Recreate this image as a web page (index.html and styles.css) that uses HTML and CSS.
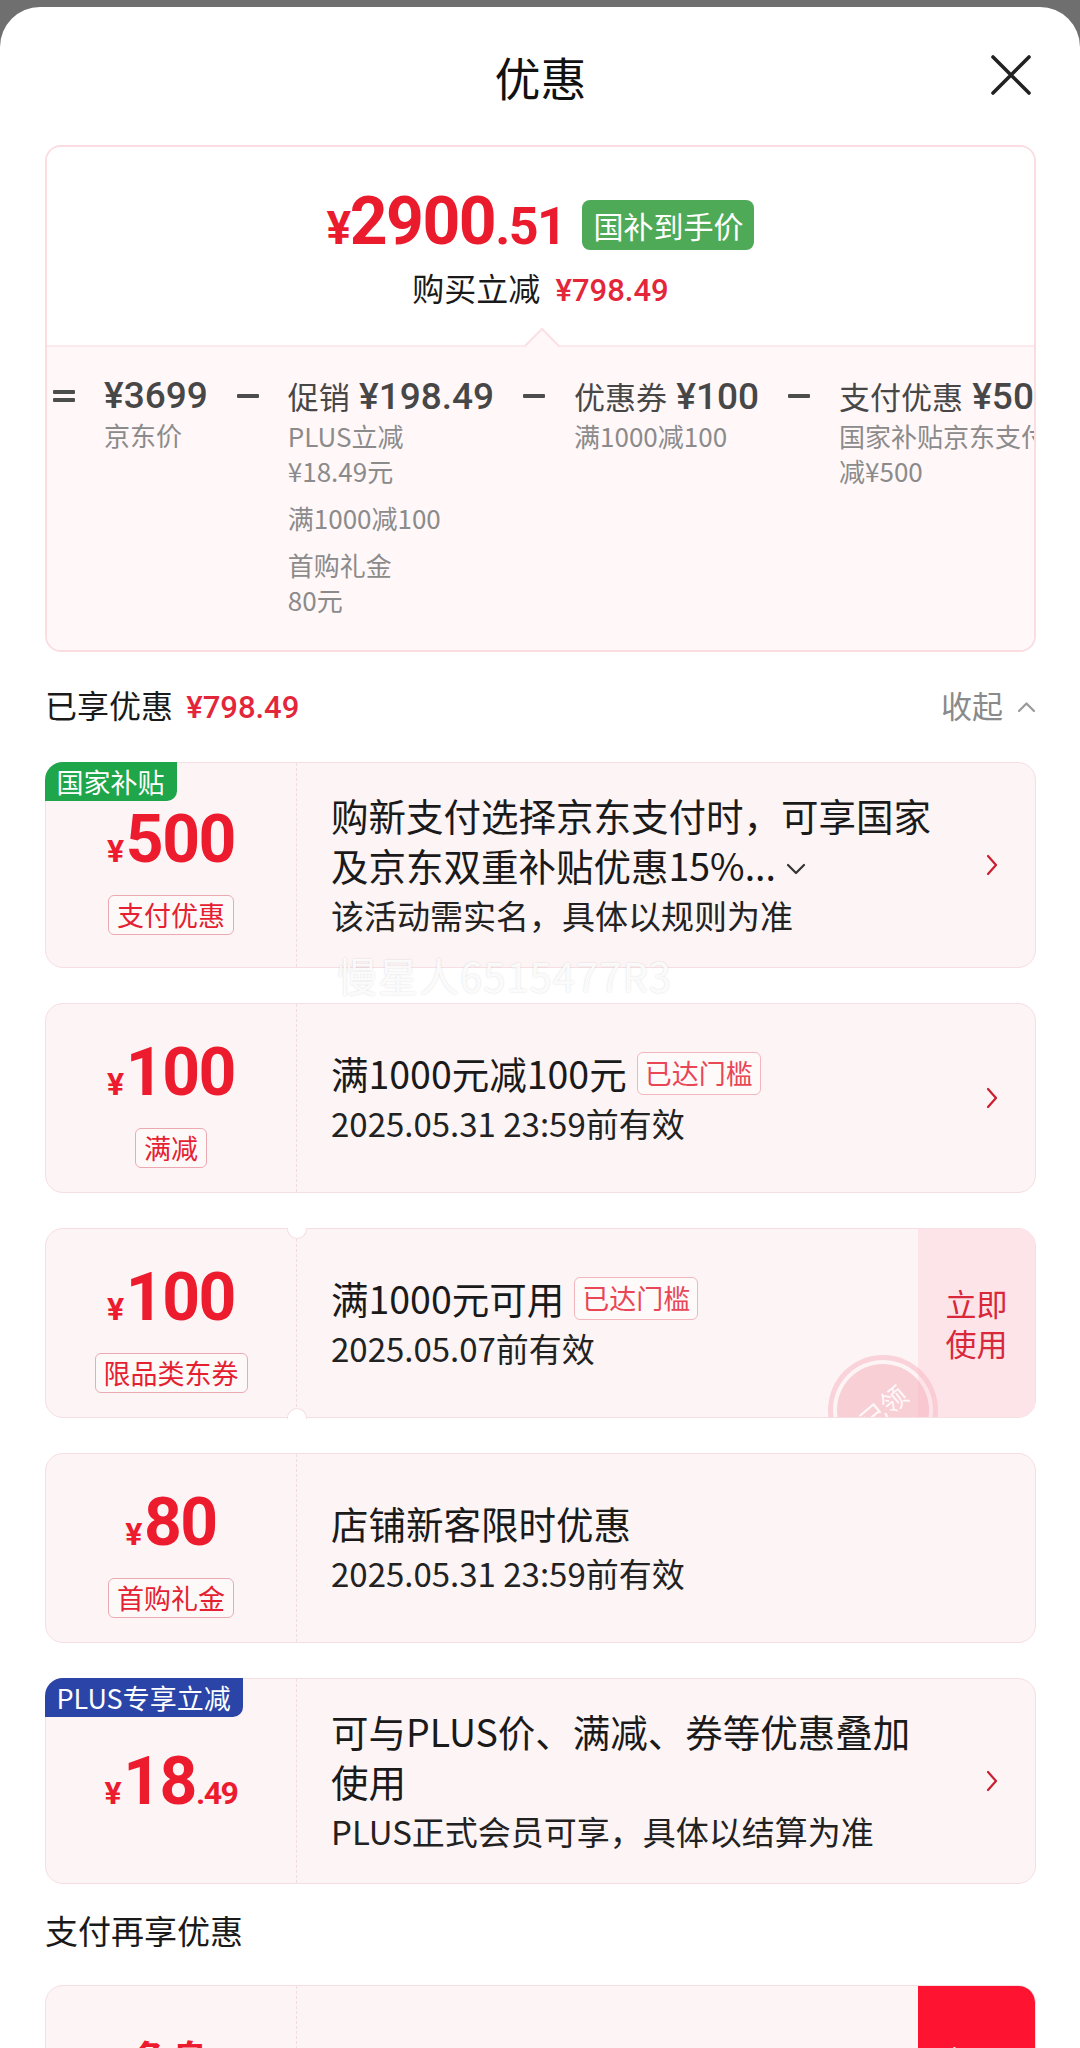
FILE: index.html
```html
<!DOCTYPE html>
<html lang="zh-CN">
<head>
<meta charset="utf-8">
<title>优惠</title>
<link rel="stylesheet" href="styles.css">
</head>
<body>
<div class="sheet">
  <header class="header">
    <h1 class="title">优惠</h1>
    <button class="close" aria-label="关闭">
      <svg viewBox="0 0 42 40"><path d="M3 2 L39 38 M39 2 L3 38"/></svg>
    </button>
  </header>

  <section class="summary">
    <div class="summary-top">
      <div class="final">
        <span class="final-price"><span class="cur">¥</span>2900<span class="dec">.51</span></span>
        <span class="final-badge">国补到手价</span>
      </div>
      <div class="save">购买立减 <span class="save-amt">¥798.49</span></div>
    </div>
    <div class="summary-bottom">
      <div class="breakdown">
        <span class="op op-eq"><i></i><i></i></span>
        <div class="bk-col">
          <div class="bk-title"><span class="bk-num">¥3699</span></div>
          <div class="bk-sub"><p>京东价</p></div>
        </div>
        <span class="op"><i></i></span>
        <div class="bk-col">
          <div class="bk-title"><span class="bk-label">促销</span><span class="bk-num"> ¥198.49</span></div>
          <div class="bk-sub">
            <p>PLUS立减<br>¥18.49元</p>
            <p>满1000减100</p>
            <p>首购礼金<br>80元</p>
          </div>
        </div>
        <span class="op"><i></i></span>
        <div class="bk-col">
          <div class="bk-title"><span class="bk-label">优惠券</span><span class="bk-num"> ¥100</span></div>
          <div class="bk-sub"><p>满1000减100</p></div>
        </div>
        <span class="op"><i></i></span>
        <div class="bk-col">
          <div class="bk-title"><span class="bk-label">支付优惠</span><span class="bk-num"> ¥500</span></div>
          <div class="bk-sub"><p>国家补贴京东支付立<br>减¥500</p></div>
        </div>
      </div>
    </div>
  </section>

  <div class="applied">
    <div class="applied-title">已享优惠 <span class="applied-amt">¥798.49</span></div>
    <div class="collapse">收起<svg viewBox="0 0 19 12"><path d="M2 10 L9.5 2.5 L17 10"/></svg></div>
  </div>

  <div class="coupons">
    <div class="card">
      <span class="corner corner-green">国家补贴</span>
      <div class="card-left">
        <div class="amount"><span class="cur">¥</span>500</div>
        <span class="tag">支付优惠</span>
      </div>
      <div class="card-body">
        <div class="card-text">
          <div class="card-title">购新支付选择京东支付时，可享国家<br>及京东双重补贴优惠15%...<svg class="more" viewBox="0 0 20 12"><path d="M2 2 L10 10 L18 2"/></svg></div>
          <div class="card-sub">该活动需实名，具体以规则为准</div>
        </div>
        <svg class="chev" viewBox="0 0 12 22"><path d="M2 2 L10 11 L2 20"/></svg>
      </div>
    </div>

    <div class="card">
      <div class="card-left">
        <div class="amount"><span class="cur">¥</span>100</div>
        <span class="tag">满减</span>
      </div>
      <div class="card-body">
        <div class="card-text">
          <div class="card-title">满1000元减100元<span class="reach">已达门槛</span></div>
          <div class="card-sub">2025.05.31 23:59前有效</div>
        </div>
        <svg class="chev" viewBox="0 0 12 22"><path d="M2 2 L10 11 L2 20"/></svg>
      </div>
    </div>

    <div class="card ticket">
      <div class="stamp-clip"><div class="stamp"><span>已领</span></div></div>
      <div class="card-left">
        <div class="amount"><span class="cur">¥</span>100</div>
        <span class="tag">限品类东券</span>
      </div>
      <div class="card-body">
        <div class="card-text">
          <div class="card-title">满1000元可用<span class="reach">已达门槛</span></div>
          <div class="card-sub">2025.05.07前有效</div>
        </div>
      </div>
      <div class="card-action">立即<br>使用</div>
    </div>

    <div class="card">
      <div class="card-left">
        <div class="amount"><span class="cur">¥</span>80</div>
        <span class="tag">首购礼金</span>
      </div>
      <div class="card-body">
        <div class="card-text">
          <div class="card-title">店铺新客限时优惠</div>
          <div class="card-sub">2025.05.31 23:59前有效</div>
        </div>
      </div>
    </div>

    <div class="card">
      <span class="corner corner-blue">PLUS专享立减</span>
      <div class="card-left">
        <div class="amount"><span class="cur">¥</span>18<span class="dec">.49</span></div>
      </div>
      <div class="card-body">
        <div class="card-text">
          <div class="card-title">可与PLUS价、满减、券等优惠叠加<br>使用</div>
          <div class="card-sub">PLUS正式会员可享，具体以结算为准</div>
        </div>
        <svg class="chev" viewBox="0 0 12 22"><path d="M2 2 L10 11 L2 20"/></svg>
      </div>
    </div>
  </div>

  <h2 class="section-title">支付再享优惠</h2>

  <div class="card card-pay">
    <div class="card-left card-left-top"><span class="free">免息</span></div>
    <div class="card-body"></div>
    <div class="card-action action-red">领取</div>
  </div>

  <div class="watermark">慢星人6515477R3</div>
</div>
</body>
</html>
```

FILE: styles.css
```css
* { box-sizing: border-box; margin: 0; padding: 0; }

html, body { width: 1080px; }

body {
  background: #6f6f6f;
  font-family: "Noto Sans CJK SC", "Noto Sans", sans-serif;
  color: #1a1a1a;
  height: 2048px;
  overflow: hidden;
}

.sheet {
  position: relative;
  margin-top: 7px;
  background: #fff;
  border-radius: 40px 40px 0 0;
  padding: 0 44px 40px 45px;
  min-height: 2041px;
}

/* header */
.header {
  position: relative;
  height: 138px;
  display: flex;
  align-items: center;
  justify-content: center;
}
.title {
  font-size: 46px;
  font-weight: 400;
  line-height: 1;
  color: #111;
}
.close {
  position: absolute;
  right: 4px;
  top: 48px;
  width: 42px;
  height: 40px;
  border: 0;
  background: none;
}
.close svg {
  display: block;
  width: 42px;
  height: 40px;
  fill: none;
  stroke: #222;
  stroke-width: 3.6;
  stroke-linecap: round;
}

/* summary */
.summary {
  border: 2px solid #fbdce1;
  border-radius: 16px;
  overflow: hidden;
}
.summary-top {
  height: 198px;
  padding-top: 53px;
  display: flex;
  flex-direction: column;
  align-items: center;
  background: #fff;
}
.final {
  display: flex;
  align-items: center;
  gap: 17px;
  height: 50px;
}
.final-price {
  font-family: Roboto, "Noto Sans", sans-serif;
  font-weight: 700;
  font-size: 66px;
  line-height: 50px;
  letter-spacing: -1.5px;
  color: #eb1b2e;
}
.final-price .cur { font-size: 46px; }
.final-price .dec { font-size: 52px; }
.final-badge {
  height: 50px;
  line-height: 50px;
  padding: 0 11px;
  border-radius: 8px;
  background: #4faa57;
  color: #fff;
  font-size: 30px;
}
.save {
  margin-top: 17px;
  font-size: 32px;
  line-height: 40px;
  color: #1a1a1a;
}
.save-amt {
  margin-left: 8px;
  font-family: Roboto, "Noto Sans", sans-serif;
  font-weight: 500;
  font-size: 31px;
  color: #e4263a;
}

.summary-bottom {
  position: relative;
  background: #fff7f8;
  border-top: 2px solid #fdeaee;
  padding: 27px 0 33px 6px;
}
.summary-bottom::before {
  content: "";
  position: absolute;
  top: -14px;
  left: 50%;
  width: 24px;
  height: 24px;
  margin-left: -12px;
  transform: rotate(45deg);
  background: #fff7f8;
  border-left: 2px solid #fbe0e5;
  border-top: 2px solid #fbe0e5;
}
.breakdown {
  position: relative;
  display: flex;
  align-items: flex-start;
  gap: 29px;
}
.breakdown > * { flex-shrink: 0; }
.op {
  width: 22px;
  height: 44px;
  display: flex;
  flex-direction: column;
  justify-content: center;
  gap: 4px;
}
.op i {
  display: block;
  height: 4px;
  background: #4d4d4d;
  border-radius: 1px;
}
.bk-title {
  line-height: 44px;
  white-space: nowrap;
  color: #474747;
}
.bk-label { font-size: 31px; }
.bk-num {
  font-family: Roboto, "Noto Sans", sans-serif;
  font-size: 37px;
  font-weight: 500;
}
.bk-sub {
  margin-top: -6px;
  color: #8b8b8b;
  font-size: 26px;
  line-height: 35px;
  white-space: nowrap;
}
.bk-sub p + p { margin-top: 12px; }

/* applied header */
.applied {
  display: flex;
  justify-content: space-between;
  align-items: center;
  height: 44px;
  margin: 30px 0 36px;
}
.applied-title {
  font-size: 32px;
  color: #1a1a1a;
}
.applied-amt {
  margin-left: 6px;
  font-family: Roboto, "Noto Sans", sans-serif;
  font-weight: 500;
  font-size: 31px;
  color: #e4263a;
}
.collapse {
  display: flex;
  align-items: center;
  font-size: 31px;
  color: #8a8a8a;
}
.collapse svg {
  width: 19px;
  height: 12px;
  margin-left: 14px;
  margin-top: 6px;
  fill: none;
  stroke: #9a9a9a;
  stroke-width: 2.2;
  stroke-linecap: round;
  stroke-linejoin: round;
}

/* coupon cards */
.coupons {
  display: flex;
  flex-direction: column;
  gap: 35px;
}
.card {
  position: relative;
  display: flex;
  min-height: 190px;
  background: #fdf4f5;
  border: 1.5px solid #f6dee2;
  border-radius: 18px;
}
.corner {
  position: absolute;
  top: -1.5px;
  left: -1.5px;
  z-index: 3;
  height: 39px;
  line-height: 39px;
  padding: 0 12px;
  font-size: 27px;
  color: #fff;
  border-radius: 18px 0 10px 0;
}
.corner-green { background: #1fa54a; }
.corner-blue { background: #2a45a7; }

.card-left {
  width: 251px;
  flex: none;
  display: flex;
  flex-direction: column;
  align-items: center;
  justify-content: center;
  padding-top: 12px;
  border-right: 1.5px dashed #f0dde0;
}
.amount {
  font-family: Roboto, "Noto Sans", sans-serif;
  font-weight: 700;
  font-size: 66px;
  line-height: 64px;
  letter-spacing: -1.5px;
  color: #ec1b2e;
  white-space: nowrap;
}
.amount .cur { font-size: 32px; margin-right: 3px; }
.amount .dec { font-size: 32px; }
.tag {
  margin-top: 12px;
  height: 40px;
  line-height: 37px;
  padding: 0 8px;
  border: 1.5px solid #eda9b1;
  border-radius: 6px;
  font-size: 27px;
  color: #e52131;
  background: rgba(255, 255, 255, 0.45);
}

.card-body {
  flex: 1;
  display: flex;
  align-items: center;
  padding: 27px 37px 27px 34px;
}
.card-text {
  flex: 1;
  min-width: 0;
}
.card-title {
  font-size: 37.5px;
  line-height: 50px;
  white-space: nowrap;
  color: #1a1a1a;
}
.card-sub {
  font-size: 33px;
  line-height: 50px;
  color: #222;
}
.more {
  width: 20px;
  height: 12px;
  margin-left: 10px;
  vertical-align: 6px;
  fill: none;
  stroke: #333;
  stroke-width: 2.2;
  stroke-linecap: round;
  stroke-linejoin: round;
}
.chev {
  flex: none;
  width: 12px;
  height: 22px;
  fill: none;
  stroke: #c91f2f;
  stroke-width: 2.2;
  stroke-linecap: round;
  stroke-linejoin: round;
}
.reach {
  display: inline-block;
  vertical-align: top;
  margin: 3.5px 0 0 10px;
  height: 43px;
  line-height: 40px;
  padding: 0 7px;
  border: 1.5px solid #f3b6bd;
  border-radius: 6px;
  font-size: 27px;
  color: #e94656;
  background: rgba(255, 255, 255, 0.5);
}

/* ticket (card 3) */
.ticket::before,
.ticket::after {
  content: "";
  position: absolute;
  left: 241px;
  z-index: 2;
  width: 18px;
  height: 10px;
  background: #fff;
  border: 1.5px solid #f6dee2;
}
.ticket::before {
  top: -1.5px;
  border-top: none;
  border-radius: 0 0 10px 10px;
}
.ticket::after {
  bottom: -1.5px;
  border-bottom: none;
  border-radius: 10px 10px 0 0;
}
.card-action {
  width: 117px;
  flex: none;
  display: flex;
  align-items: center;
  justify-content: center;
  text-align: center;
  background: #fde4e9;
  border-radius: 0 16.5px 16.5px 0;
  font-size: 31px;
  line-height: 40px;
  color: #d8283a;
}
.stamp-clip {
  position: absolute;
  inset: 0;
  overflow: hidden;
  border-radius: 16.5px;
  z-index: 1;
  pointer-events: none;
}
.stamp {
  position: absolute;
  left: 782px;
  top: 126px;
  width: 110px;
  height: 110px;
  border-radius: 50%;
  border: 5px solid rgba(247, 184, 195, 0.55);
  padding: 4px;
  background: rgba(245, 170, 184, 0.5);
  background-clip: content-box;
  display: flex;
  align-items: center;
  justify-content: center;
}
.stamp span {
  margin-top: -6px;
  font-size: 26px;
  line-height: 30px;
  color: rgba(255, 255, 255, 0.9);
  transform: rotate(-40deg);
}

/* pay section */
.section-title {
  margin: 23px 0 32px;
  font-size: 33px;
  font-weight: 400;
  line-height: 46px;
  color: #1a1a1a;
}
.card-pay { min-height: 200px; }
.card-left-top {
  justify-content: flex-start;
  padding-top: 46px;
}
.free {
  font-size: 38px;
  line-height: 50px;
  font-weight: 700;
  color: #ec1b2e;
}
.action-red {
  align-items: flex-start;
  padding-top: 54px;
  background: #fe1430;
  color: #fff;
  border-radius: 0 16.5px 0 0;
}

/* watermark overlay */
.watermark {
  position: absolute;
  left: 337px;
  top: 944px;
  z-index: 5;
  font-size: 40px;
  line-height: 48px;
  letter-spacing: 1px;
  color: rgba(255, 255, 255, 0.9);
  text-shadow: 0 0 2px rgba(0, 0, 0, 0.15);
  pointer-events: none;
  white-space: nowrap;
}
```
